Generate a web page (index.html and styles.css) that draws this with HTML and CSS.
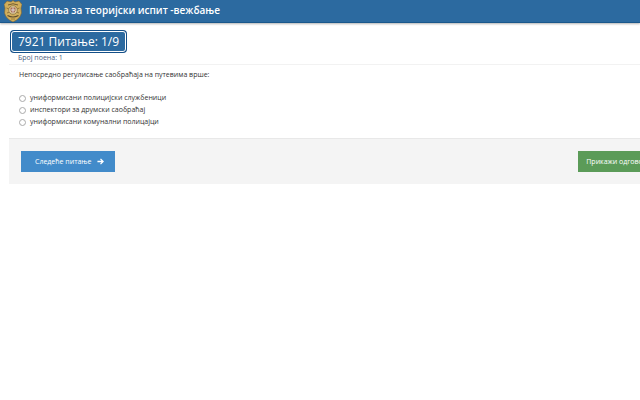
FILE: index.html
```html
<!DOCTYPE html>
<html lang="sr">
<head>
  <meta charset="UTF-8" />
  <meta name="viewport" content="width=device-width, initial-scale=1.0"/>
  <title>Питања за теоријски испит</title>
  <link rel="stylesheet" href="styles.css">
</head>
<body>
  <header class="navbar">
    <svg class="logo" viewBox="0 0 18 22" aria-hidden="true">
      <path d="M9 .5 L11 2 L15 1 L18 4.500 L17 8 L17.500 13 Q16 19 9 22 Q2 19 .5 13 L1 8 L0 4.500 L3 1 L7 2 Z" fill="#d0ae5c" stroke="#80652f" stroke-width=".6"/>
      <path d="M4 5 Q9 2.500 14 5" fill="none" stroke="#715b32" stroke-width="1"/>
      <path d="M2.500 8 L5 9 M15.500 8 L13 9 M3 13 L5.500 12 M15 13 L12.500 12" stroke="#93763c" stroke-width="1"/>
      <circle cx="9" cy="10" r="4.300" fill="#dfcf9d" stroke="#8c7140" stroke-width=".8"/>
      <path d="M6.500 7.500 H11.500 V10.500 Q11 12.500 9 13.200 Q7 12.500 6.500 10.500 Z" fill="#a86a55"/>
      <path d="M9 7.500 V13 M7 10 H11" stroke="#e8e4e2" stroke-width=".9"/>
      <path d="M3.500 15.500 Q9 18.500 14.500 15.500" fill="none" stroke="#5e4c2b" stroke-width="1.200"/>
      <path d="M7 19 H11" stroke="#927436" stroke-width=".8"/>
    </svg>
    <h1 class="page-title">Питања за теоријски испит -вежбање</h1>
  </header>

  <main>
    <form class="question">
      <div class="question-header">
        <h2 class="question-title">7921 Питање: 1/9</h2>
        <p class="points">Број поена: 1</p>
      </div>

      <fieldset class="question-body">
        <legend class="question-text">Непосредно регулисање саобраћаја на путевима врше:</legend>
        <label class="answer"><input type="radio" name="answer" value="1" />униформисани полицијски службеници</label>
        <label class="answer"><input type="radio" name="answer" value="2" />инспектори за друмски саобраћај</label>
        <label class="answer"><input type="radio" name="answer" value="3" />униформисани комунални полицајци</label>
      </fieldset>

      <div class="actions">
        <button type="button" class="btn next-btn">
          Следеће питање
          <svg class="arrow" viewBox="0 0 8 8" aria-hidden="true">
            <path d="M.5 4 H7 M4 1 L7 4 L4 7" fill="none" stroke="currentColor" stroke-width="1.500"/>
          </svg>
        </button>
        <button type="button" class="btn show-btn">Прикажи одговор</button>
      </div>
    </form>
  </main>
</body>
</html>
```

FILE: styles.css
```css
* {
  margin: 0;
  padding: 0;
  box-sizing: border-box;
}

body {
  font-family: "Open Sans", "Noto Sans", sans-serif;
  font-size: 7px;
  line-height: 12px;
  background-color: #fff;
  color: #333;
  overflow-x: hidden;
}

.navbar {
  display: flex;
  align-items: center;
  gap: 7px;
  height: 23px;
  padding: 0 4px;
  background-color: #2c6aa0;
  border-bottom: 1px solid #1b588c;
  box-shadow: 0 1px 2px rgba(0, 0, 0, 0.3);
}

.logo {
  width: 18px;
  height: 22px;
}

.page-title {
  color: #fff;
  font-size: 10px;
  font-weight: 550;
  line-height: 20px;
  padding-bottom: 2px;
}

main {
  padding-top: 8px;
  padding-left: 9px;
}

/* the form is a little wider than the window, as is its button bar */
.question {
  margin-right: -31px;
}

.question-header {
  padding-left: 2px;
  border-bottom: 1px solid #f2f2f2;
}

.question-title {
  width: fit-content;
  padding: 0 6px;
  color: #fff;
  background-color: #2c6aa0;
  border: 1px solid #fff;
  border-radius: 3px;
  box-shadow: 0 0 0 1px #144f88;
  font-size: 12px;
  font-weight: 500;
  line-height: 19px;
}

.points {
  padding-left: 7px;
  color: #4a5d80;
  line-height: 12px;
}

.question-body {
  padding: 4px 10px 10px;
  border: none;
}

.question-text {
  padding-top: 4px;
  margin-bottom: 7px;
}

.answer {
  display: flex;
  align-items: center;
  gap: 4px;
}

.answer input {
  appearance: none;
  width: 7px;
  height: 7px;
  border: 1px solid #aaa;
  border-radius: 50%;
}

.answer input:checked {
  background-color: #428bca;
}

.actions {
  display: flex;
  justify-content: space-between;
  padding: 12px 12px;
  background-color: #f4f4f4;
  border-top: 1px solid #e8e8e8;
}

.btn {
  display: flex;
  align-items: center;
  gap: 6px;
  height: 21px;
  border: none;
  color: #fff;
  font-family: inherit;
  font-size: 7px;
  font-weight: 500;
  cursor: pointer;
}

.next-btn {
  padding: 0 11px 0 14px;
  background-color: #428bca;
}

.show-btn {
  padding: 0 12px 0 8px;
  background-color: #5b9b58;
}

.arrow {
  width: 7px;
  height: 7px;
}
```
